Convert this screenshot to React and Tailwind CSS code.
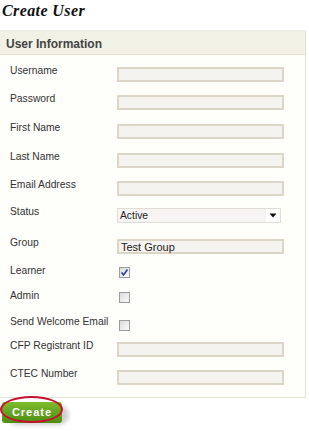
import React, { useState } from "react";

const rows = [
  { label: "Username", type: "text", h: "h-[28px]" },
  { label: "Password", type: "text", h: "h-[29px]" },
  { label: "First Name", type: "text", h: "h-[29px]" },
  { label: "Last Name", type: "text", h: "h-[28px]" },
  { label: "Email Address", type: "text", h: "h-[27px]" },
];

const TextBox = ({ value = "" }) => (
  <div className="w-[167px] h-[15px] bg-[#f5f3ef] border-2 border-[#dcd6c8] text-[11px] leading-[11px] text-[#222] pl-[2px] pt-[1px]">
    {value}
  </div>
);

const Check = ({ checked }) => (
  <div className="ml-[2px] w-[11px] h-[11px] border border-[#9c9c9c] bg-gradient-to-br from-[#dcdcdc] to-[#fafafa] flex items-center justify-center">
    {checked && (
      <svg width="9" height="9" viewBox="0 0 9 9">
        <path d="M1.5 4.5 L3.5 7 L7.5 1.5" fill="none" stroke="#2a3f9c" strokeWidth="1.6" />
      </svg>
    )}
  </div>
);

const Label = ({ children }) => (
  <div className="w-[117px] shrink-0 pl-[10px] -mt-[3px] text-[10.3px] leading-[13px] text-[#333] whitespace-nowrap">{children}</div>
);

export default function App() {
  const [learner] = useState(true);

  return (
    <div className="w-[309px] h-[431px] bg-white font-['Liberation_Sans',Arial,sans-serif] overflow-hidden">
      <h1 className="pl-[2px] pt-[2px] h-[30px] font-['Liberation_Serif',serif] italic font-bold text-[16px] leading-[18px] tracking-[0.4px] text-[#111]">
        Create User
      </h1>
      <div className="w-[306px] border-r border-b border-[#e6e3d2] bg-[#fefefa]">
        <div className="h-[25px] bg-[#f2f1e5] border-b border-[#e4e1cf] pl-[6px] pt-[5px] text-[12px] font-bold text-[#444]">
          User Information
        </div>
        <div className="pt-[12px] pb-[13px]">
          {rows.map((r) => (
            <div key={r.label} className={`flex items-start ${r.h}`}>
              <Label>{r.label}</Label>
              <TextBox />
            </div>
          ))}
          <div className="flex items-start h-[31px]">
            <Label>Status</Label>
            <div className="w-[164px] h-[15px] border border-[#e0ddd6] bg-white flex items-center">
              <div className="w-[148px] h-full bg-[#f7f5f3] text-[10.3px] leading-[13px] pl-[2px] text-[#222]">Active</div>
              <svg width="8" height="5" viewBox="0 0 8 5" className="ml-[3px]">
                <path d="M0.5 0.5 H7.5 L4 4.5 Z" fill="#111" />
              </svg>
            </div>
          </div>
          <div className="flex items-start h-[28px]">
            <Label>Group</Label>
            <TextBox value="Test Group" />
          </div>
          <div className="flex items-start h-[25px]">
            <Label>Learner</Label>
            <Check checked={learner} />
          </div>
          <div className="flex items-start h-[26px]">
            <Label>Admin</Label>
            <Check />
          </div>
          <div className="flex items-start h-[24px]">
            <Label>Send Welcome Email</Label>
            <div className="mt-[2px]">
              <Check />
            </div>
          </div>
          <div className="flex items-start h-[28px]">
            <Label>CFP Registrant ID</Label>
            <TextBox />
          </div>
          <div className="flex items-start h-[14px]">
            <Label>CTEC Number</Label>
            <TextBox />
          </div>
        </div>
      </div>
      <div className="relative mt-[1px] ml-[2px] w-[60px] h-[21px]">
        <div className="absolute left-[5px] top-[6px] w-[62px] h-[20px] rounded-[10px] bg-[#cfcfcf] blur-[2px]" />
        <button className="relative w-[60px] h-[21px] rounded-[3px] bg-gradient-to-b from-[#7dbb2e] to-[#4c8d12] text-white font-bold text-[11px] tracking-[1px]">
          Create
        </button>
        <div className="absolute -left-[2px] -top-[3px] w-[63px] h-[27px] rounded-[50%] border-2 border-[#c8102e]" />
      </div>
    </div>
  );
}
